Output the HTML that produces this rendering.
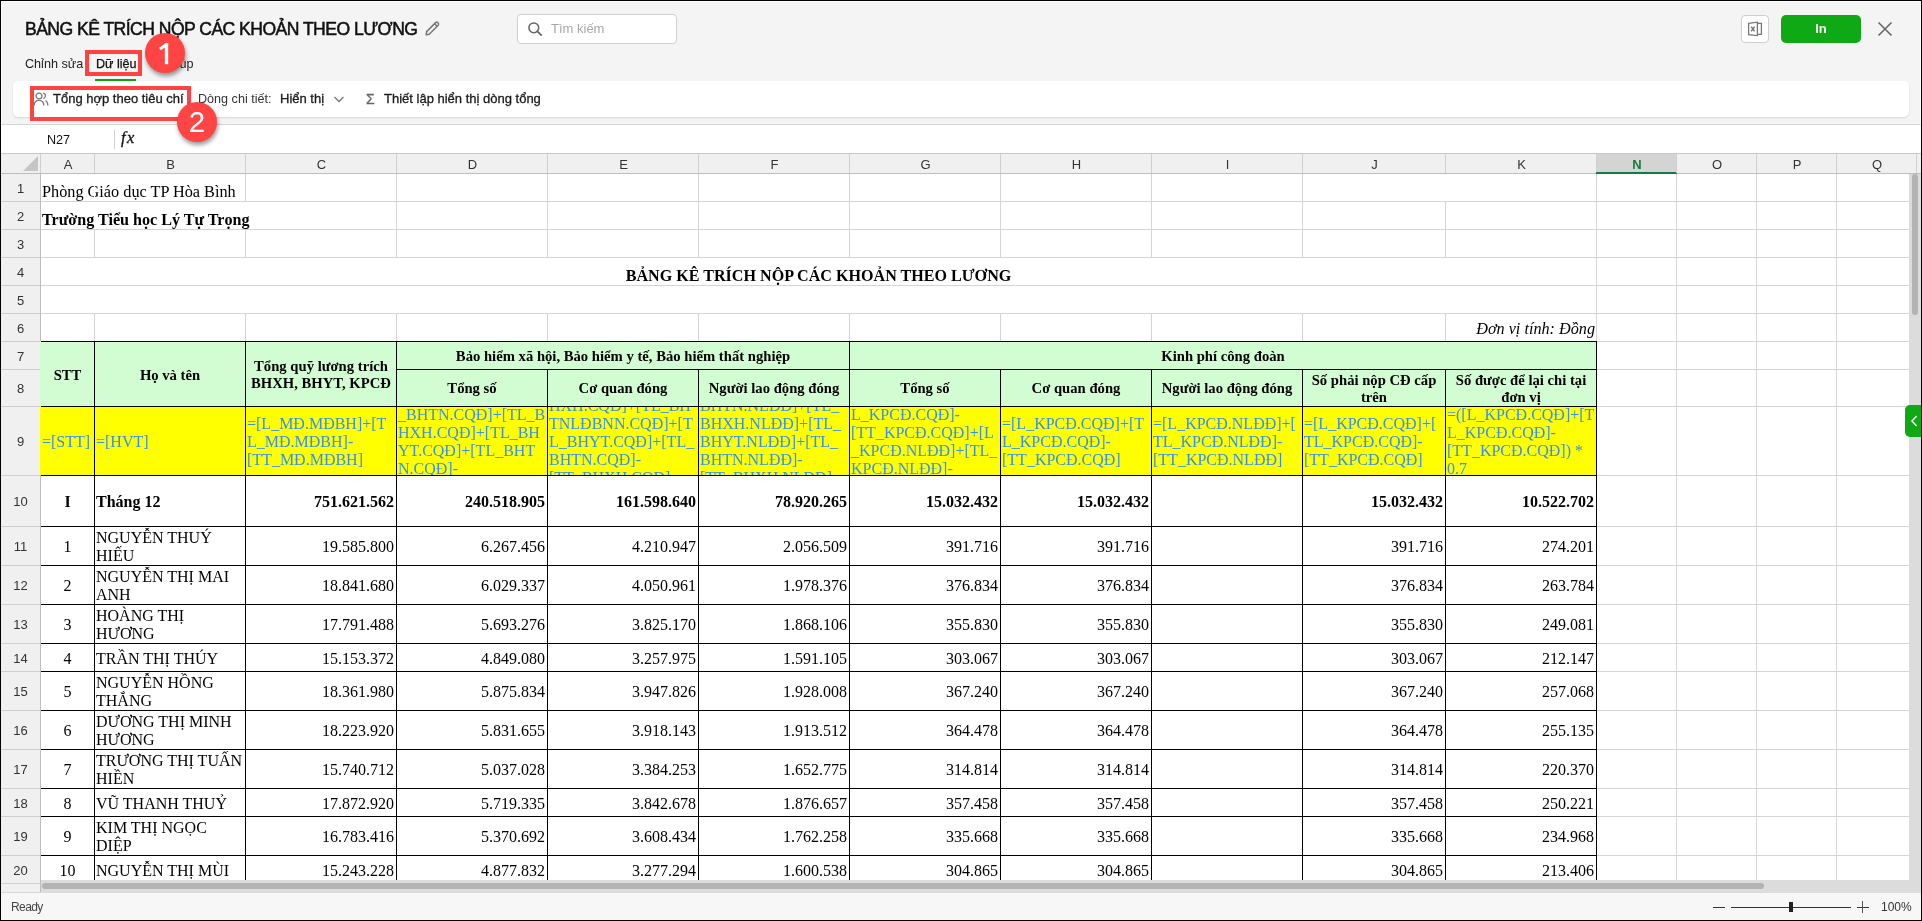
<!DOCTYPE html>
<html><head><meta charset="utf-8"><title>Bang ke</title>
<style>
*{box-sizing:border-box;margin:0;padding:0}
html,body{width:1922px;height:921px;overflow:hidden;background:#000}
body{position:relative;font-family:"Liberation Sans",sans-serif}
body div{position:absolute}
.c{display:flex;align-items:center;overflow:hidden;white-space:nowrap;font-family:"Liberation Serif",serif;font-size:16px;line-height:18px;color:#000}
.c span{display:block}
.hd{font-family:"Liberation Sans",sans-serif;font-size:13px;color:#333;display:flex;align-items:center;justify-content:center}
#wrap{left:0;top:0;width:1922px;height:921px;will-change:transform}
</style></head><body><div id="wrap">

<div style="left:1px;top:1px;width:1920px;height:919px;background:#fff"></div>
<div style="left:2px;top:2px;width:1918px;height:917px;background:#f4f4f4"></div>
<div style="left:25px;top:17px;height:24px;line-height:24px;font-size:17.6px;letter-spacing:-0.55px;color:#111;white-space:nowrap;-webkit-text-stroke:0.5px #111">BẢNG KÊ TRÍCH NỘP CÁC KHOẢN THEO LƯƠNG</div>
<svg style="position:absolute;left:423px;top:20px" width="18" height="18" viewBox="0 0 18 18"><g fill="none" stroke="#777" stroke-width="1.5"><path d="M3.2 14.8 L3.6 11.6 L12.6 2.6 Q13.8 1.6 15 2.8 Q16.2 4 15.2 5.2 L6.2 14.2 Z" stroke-linejoin="round"/><path d="M11.6 3.8 L14 6.2"/></g></svg>
<div style="left:517px;top:14px;width:160px;height:30px;background:#fff;border:1px solid #cfcfcf;border-radius:4px"></div>
<svg style="position:absolute;left:527px;top:21px" width="16" height="16" viewBox="0 0 16 16"><circle cx="6.8" cy="6.8" r="4.9" fill="none" stroke="#666" stroke-width="1.5"/><path d="M10.4 10.4 L14.2 14.2" stroke="#666" stroke-width="1.7" stroke-linecap="round"/></svg>
<div style="left:551px;top:20px;height:18px;line-height:18px;font-size:13px;color:#a8a8a8;white-space:nowrap">Tìm kiếm</div>
<div style="left:1741px;top:15px;width:28px;height:28px;background:#fff;border:1px solid #cfcfcf;border-radius:4px"></div>
<svg style="position:absolute;left:1745px;top:19px" width="20" height="20" viewBox="0 0 20 20"><g fill="none" stroke="#777" stroke-width="1.3"><path d="M3.6 4.4 L12.4 3.2 L12.4 16.6 L3.6 15.6 Z"/><path d="M12.4 4.4 L16.4 4.4 L16.4 15.4 L12.4 15.4"/><path d="M6.2 7.6 L9.6 12.4 M9.6 7.6 L6.2 12.4" stroke-width="1.5"/></g></svg>
<div style="left:1781px;top:15px;width:80px;height:28px;background:#0ea914;border-radius:5px"></div>
<div style="left:1781px;top:15px;width:80px;height:28px;line-height:28px;text-align:center;font-size:13px;font-weight:bold;color:#fff">In</div>
<svg style="position:absolute;left:1876px;top:20px" width="18" height="18" viewBox="0 0 18 18"><path d="M2.5 2.5 L15.5 15.5 M15.5 2.5 L2.5 15.5" stroke="#666" stroke-width="1.6"/></svg>
<div style="left:25px;top:55px;height:18px;line-height:18px;font-size:12.6px;color:#222;white-space:nowrap">Chỉnh sửa</div>
<div style="left:96px;top:55px;height:18px;line-height:18px;font-size:12.6px;color:#111;white-space:nowrap;-webkit-text-stroke:0.25px #111">Dữ liệu</div>
<div style="left:167px;top:55px;height:18px;line-height:18px;font-size:12.6px;color:#222;white-space:nowrap">Giúp</div>
<div style="left:95px;top:79px;width:41px;height:2px;background:#0fa30f"></div>
<div style="left:13px;top:81px;width:1896px;height:36px;background:#fff;border-radius:5px;box-shadow:0 1px 2px rgba(0,0,0,0.12)"></div>
<svg style="position:absolute;left:33px;top:91px" width="16" height="16" viewBox="0 0 16 16"><g fill="none" stroke="#7a7a7a" stroke-width="1.3"><circle cx="6" cy="5" r="2.9"/><path d="M1.2 14.6 Q1.2 9.4 6 9.4 Q10.8 9.4 10.8 14.6"/><path d="M10.2 2.2 Q12.6 2.6 12.4 5 Q12.2 7 10.4 7.6"/><path d="M12.4 9.6 Q14.8 10.4 14.8 14.6"/></g></svg>
<div style="left:53px;top:90px;height:18px;line-height:18px;font-size:13px;color:#1a1a1a;white-space:nowrap;-webkit-text-stroke:0.3px #1a1a1a">Tổng hợp theo tiêu chí</div>
<div style="left:198px;top:90px;height:18px;line-height:18px;font-size:12.6px;color:#333;white-space:nowrap">Dòng chi tiết:</div>
<div style="left:280px;top:90px;height:18px;line-height:18px;font-size:13px;color:#1a1a1a;white-space:nowrap;-webkit-text-stroke:0.3px #1a1a1a">Hiển thị</div>
<svg style="position:absolute;left:333px;top:94px" width="12" height="10" viewBox="0 0 12 10"><path d="M1.5 3 L6 7.5 L10.5 3" fill="none" stroke="#777" stroke-width="1.3"/></svg>
<div style="left:366px;top:90px;height:18px;line-height:18px;font-size:14px;color:#666;-webkit-text-stroke:0.3px #666;white-space:nowrap">Σ</div>
<div style="left:384px;top:90px;height:18px;line-height:18px;font-size:13px;color:#1a1a1a;white-space:nowrap;-webkit-text-stroke:0.3px #1a1a1a">Thiết lập hiển thị dòng tổng</div>
<div style="left:1px;top:124px;width:1920px;height:1px;background:#d6d6d6"></div>
<div style="left:2px;top:125px;width:1918px;height:28px;background:#fff"></div>
<div style="left:47px;top:131px;height:18px;line-height:18px;font-size:12.6px;color:#111;white-space:nowrap">N27</div>
<div style="left:114px;top:130px;width:1px;height:19px;background:#d0d0d0"></div>
<div style="left:121px;top:128px;height:20px;line-height:20px;font-family:'Liberation Serif', serif;font-style:italic;font-size:16.5px;letter-spacing:1.3px;color:#111;-webkit-text-stroke:0.3px #111;white-space:nowrap">fx</div>
<div style="left:1px;top:153px;width:1920px;height:1px;background:#c8c8c8"></div>
<div style="left:1px;top:154px;width:1920px;height:19px;background:#f0f0f0"></div>
<div style="left:1px;top:173px;width:1920px;height:1px;background:#bdbdbd"></div>
<svg style="position:absolute;left:22px;top:155px" width="17" height="17" viewBox="0 0 17 17"><path d="M1 16 L16 1 L16 16 Z" fill="#c6c6c6"/></svg>
<div style="left:40px;top:154px;width:1px;height:19px;background:#cfcfcf"></div>
<div class="hd" style="left:41px;top:155px;width:54px;height:19px">A</div>
<div style="left:94px;top:154px;width:1px;height:19px;background:#cfcfcf"></div>
<div class="hd" style="left:95px;top:155px;width:151px;height:19px">B</div>
<div style="left:245px;top:154px;width:1px;height:19px;background:#cfcfcf"></div>
<div class="hd" style="left:246px;top:155px;width:151px;height:19px">C</div>
<div style="left:396px;top:154px;width:1px;height:19px;background:#cfcfcf"></div>
<div class="hd" style="left:397px;top:155px;width:151px;height:19px">D</div>
<div style="left:547px;top:154px;width:1px;height:19px;background:#cfcfcf"></div>
<div class="hd" style="left:548px;top:155px;width:151px;height:19px">E</div>
<div style="left:698px;top:154px;width:1px;height:19px;background:#cfcfcf"></div>
<div class="hd" style="left:699px;top:155px;width:151px;height:19px">F</div>
<div style="left:849px;top:154px;width:1px;height:19px;background:#cfcfcf"></div>
<div class="hd" style="left:850px;top:155px;width:151px;height:19px">G</div>
<div style="left:1000px;top:154px;width:1px;height:19px;background:#cfcfcf"></div>
<div class="hd" style="left:1001px;top:155px;width:151px;height:19px">H</div>
<div style="left:1151px;top:154px;width:1px;height:19px;background:#cfcfcf"></div>
<div class="hd" style="left:1152px;top:155px;width:151px;height:19px">I</div>
<div style="left:1302px;top:154px;width:1px;height:19px;background:#cfcfcf"></div>
<div class="hd" style="left:1303px;top:155px;width:143px;height:19px">J</div>
<div style="left:1445px;top:154px;width:1px;height:19px;background:#cfcfcf"></div>
<div class="hd" style="left:1446px;top:155px;width:151px;height:19px">K</div>
<div style="left:1596px;top:154px;width:1px;height:19px;background:#cfcfcf"></div>
<div style="left:1597px;top:154px;width:80px;height:18px;background:#d4d4d4"></div>
<div style="left:1596px;top:172px;width:81px;height:2px;background:#107c41"></div>
<div class="hd" style="left:1597px;top:155px;width:80px;height:19px;color:#107c41;font-weight:bold">N</div>
<div style="left:1676px;top:154px;width:1px;height:19px;background:#cfcfcf"></div>
<div class="hd" style="left:1677px;top:155px;width:80px;height:19px">O</div>
<div style="left:1756px;top:154px;width:1px;height:19px;background:#cfcfcf"></div>
<div class="hd" style="left:1757px;top:155px;width:80px;height:19px">P</div>
<div style="left:1836px;top:154px;width:1px;height:19px;background:#cfcfcf"></div>
<div class="hd" style="left:1837px;top:155px;width:80px;height:19px">Q</div>
<div style="left:1916px;top:154px;width:1px;height:19px;background:#cfcfcf"></div>
<div style="left:1px;top:174px;width:39px;height:719px;background:#f0f0f0"></div>
<div style="left:40px;top:174px;width:1px;height:719px;background:#bdbdbd"></div>
<div style="left:1px;top:201px;width:39px;height:1px;background:#cfcfcf"></div>
<div class="hd" style="left:1px;top:174px;width:39px;height:28px">1</div>
<div style="left:1px;top:229px;width:39px;height:1px;background:#cfcfcf"></div>
<div class="hd" style="left:1px;top:202px;width:39px;height:28px">2</div>
<div style="left:1px;top:257px;width:39px;height:1px;background:#cfcfcf"></div>
<div class="hd" style="left:1px;top:230px;width:39px;height:28px">3</div>
<div style="left:1px;top:285px;width:39px;height:1px;background:#cfcfcf"></div>
<div class="hd" style="left:1px;top:258px;width:39px;height:28px">4</div>
<div style="left:1px;top:313px;width:39px;height:1px;background:#cfcfcf"></div>
<div class="hd" style="left:1px;top:286px;width:39px;height:28px">5</div>
<div style="left:1px;top:341px;width:39px;height:1px;background:#cfcfcf"></div>
<div class="hd" style="left:1px;top:314px;width:39px;height:28px">6</div>
<div style="left:1px;top:369px;width:39px;height:1px;background:#cfcfcf"></div>
<div class="hd" style="left:1px;top:342px;width:39px;height:28px">7</div>
<div style="left:1px;top:406px;width:39px;height:1px;background:#cfcfcf"></div>
<div class="hd" style="left:1px;top:370px;width:39px;height:37px">8</div>
<div style="left:1px;top:475px;width:39px;height:1px;background:#cfcfcf"></div>
<div class="hd" style="left:1px;top:407px;width:39px;height:69px">9</div>
<div style="left:1px;top:526px;width:39px;height:1px;background:#cfcfcf"></div>
<div class="hd" style="left:1px;top:476px;width:39px;height:51px">10</div>
<div style="left:1px;top:565px;width:39px;height:1px;background:#cfcfcf"></div>
<div class="hd" style="left:1px;top:527px;width:39px;height:39px">11</div>
<div style="left:1px;top:604px;width:39px;height:1px;background:#cfcfcf"></div>
<div class="hd" style="left:1px;top:566px;width:39px;height:39px">12</div>
<div style="left:1px;top:643px;width:39px;height:1px;background:#cfcfcf"></div>
<div class="hd" style="left:1px;top:605px;width:39px;height:39px">13</div>
<div style="left:1px;top:671px;width:39px;height:1px;background:#cfcfcf"></div>
<div class="hd" style="left:1px;top:644px;width:39px;height:28px">14</div>
<div style="left:1px;top:710px;width:39px;height:1px;background:#cfcfcf"></div>
<div class="hd" style="left:1px;top:672px;width:39px;height:39px">15</div>
<div style="left:1px;top:749px;width:39px;height:1px;background:#cfcfcf"></div>
<div class="hd" style="left:1px;top:711px;width:39px;height:39px">16</div>
<div style="left:1px;top:788px;width:39px;height:1px;background:#cfcfcf"></div>
<div class="hd" style="left:1px;top:750px;width:39px;height:39px">17</div>
<div style="left:1px;top:816px;width:39px;height:1px;background:#cfcfcf"></div>
<div class="hd" style="left:1px;top:789px;width:39px;height:28px">18</div>
<div style="left:1px;top:855px;width:39px;height:1px;background:#cfcfcf"></div>
<div class="hd" style="left:1px;top:817px;width:39px;height:39px">19</div>
<div style="left:1px;top:883px;width:39px;height:1px;background:#cfcfcf"></div>
<div class="hd" style="left:1px;top:856px;width:39px;height:28px">20</div>
<div style="left:1px;top:892px;width:40px;height:1px;background:#d8d8d8"></div>
<div style="left:41px;top:174px;width:1868px;height:706px;background:#fff;overflow:hidden"></div>
<div style="left:94px;top:174px;width:1px;height:706px;background:#d4d4d4"></div>
<div style="left:245px;top:174px;width:1px;height:706px;background:#d4d4d4"></div>
<div style="left:396px;top:174px;width:1px;height:706px;background:#d4d4d4"></div>
<div style="left:547px;top:174px;width:1px;height:706px;background:#d4d4d4"></div>
<div style="left:698px;top:174px;width:1px;height:706px;background:#d4d4d4"></div>
<div style="left:849px;top:174px;width:1px;height:706px;background:#d4d4d4"></div>
<div style="left:1000px;top:174px;width:1px;height:706px;background:#d4d4d4"></div>
<div style="left:1151px;top:174px;width:1px;height:706px;background:#d4d4d4"></div>
<div style="left:1302px;top:174px;width:1px;height:706px;background:#d4d4d4"></div>
<div style="left:1445px;top:174px;width:1px;height:706px;background:#d4d4d4"></div>
<div style="left:1596px;top:174px;width:1px;height:706px;background:#d4d4d4"></div>
<div style="left:1676px;top:174px;width:1px;height:706px;background:#d4d4d4"></div>
<div style="left:1756px;top:174px;width:1px;height:706px;background:#d4d4d4"></div>
<div style="left:1836px;top:174px;width:1px;height:706px;background:#d4d4d4"></div>
<div style="left:1916px;top:174px;width:1px;height:706px;background:#d4d4d4"></div>
<div style="left:41px;top:201px;width:1868px;height:1px;background:#d4d4d4"></div>
<div style="left:41px;top:229px;width:1868px;height:1px;background:#d4d4d4"></div>
<div style="left:41px;top:257px;width:1868px;height:1px;background:#d4d4d4"></div>
<div style="left:41px;top:285px;width:1868px;height:1px;background:#d4d4d4"></div>
<div style="left:41px;top:313px;width:1868px;height:1px;background:#d4d4d4"></div>
<div style="left:41px;top:341px;width:1868px;height:1px;background:#d4d4d4"></div>
<div style="left:41px;top:369px;width:1868px;height:1px;background:#d4d4d4"></div>
<div style="left:41px;top:406px;width:1868px;height:1px;background:#d4d4d4"></div>
<div style="left:41px;top:475px;width:1868px;height:1px;background:#d4d4d4"></div>
<div style="left:41px;top:526px;width:1868px;height:1px;background:#d4d4d4"></div>
<div style="left:41px;top:565px;width:1868px;height:1px;background:#d4d4d4"></div>
<div style="left:41px;top:604px;width:1868px;height:1px;background:#d4d4d4"></div>
<div style="left:41px;top:643px;width:1868px;height:1px;background:#d4d4d4"></div>
<div style="left:41px;top:671px;width:1868px;height:1px;background:#d4d4d4"></div>
<div style="left:41px;top:710px;width:1868px;height:1px;background:#d4d4d4"></div>
<div style="left:41px;top:749px;width:1868px;height:1px;background:#d4d4d4"></div>
<div style="left:41px;top:788px;width:1868px;height:1px;background:#d4d4d4"></div>
<div style="left:41px;top:816px;width:1868px;height:1px;background:#d4d4d4"></div>
<div style="left:41px;top:855px;width:1868px;height:1px;background:#d4d4d4"></div>
<div style="left:41px;top:258px;width:1555px;height:27px;background:#fff"></div>
<div style="left:41px;top:286px;width:1555px;height:27px;background:#fff"></div>
<div style="left:40px;top:341px;width:1556px;height:65px;background:#d2fcd2"></div>
<div style="left:40px;top:406px;width:1556px;height:69px;background:#ffff00"></div>
<div style="left:41px;top:341px;width:1556px;height:1px;background:#000"></div>
<div style="left:396px;top:369px;width:1201px;height:1px;background:#000"></div>
<div style="left:41px;top:406px;width:1556px;height:1px;background:#000"></div>
<div style="left:41px;top:475px;width:1556px;height:1px;background:#000"></div>
<div style="left:41px;top:526px;width:1556px;height:1px;background:#000"></div>
<div style="left:41px;top:565px;width:1556px;height:1px;background:#000"></div>
<div style="left:41px;top:604px;width:1556px;height:1px;background:#000"></div>
<div style="left:41px;top:643px;width:1556px;height:1px;background:#000"></div>
<div style="left:41px;top:671px;width:1556px;height:1px;background:#000"></div>
<div style="left:41px;top:710px;width:1556px;height:1px;background:#000"></div>
<div style="left:41px;top:749px;width:1556px;height:1px;background:#000"></div>
<div style="left:41px;top:788px;width:1556px;height:1px;background:#000"></div>
<div style="left:41px;top:816px;width:1556px;height:1px;background:#000"></div>
<div style="left:41px;top:855px;width:1556px;height:1px;background:#000"></div>
<div style="left:94px;top:341px;width:1px;height:539px;background:#000"></div>
<div style="left:245px;top:341px;width:1px;height:539px;background:#000"></div>
<div style="left:396px;top:341px;width:1px;height:539px;background:#000"></div>
<div style="left:547px;top:369px;width:1px;height:511px;background:#000"></div>
<div style="left:698px;top:369px;width:1px;height:511px;background:#000"></div>
<div style="left:849px;top:341px;width:1px;height:539px;background:#000"></div>
<div style="left:1000px;top:369px;width:1px;height:511px;background:#000"></div>
<div style="left:1151px;top:369px;width:1px;height:511px;background:#000"></div>
<div style="left:1302px;top:369px;width:1px;height:511px;background:#000"></div>
<div style="left:1445px;top:369px;width:1px;height:511px;background:#000"></div>
<div style="left:1596px;top:341px;width:1px;height:539px;background:#000"></div>
<div class="c" style="left:42px;top:174px;width:400px;height:27px;justify-content:flex-start;text-align:left;padding:0;align-items:flex-end;padding-bottom:0px;font-size:16.25px">Phòng Giáo dục TP Hòa Bình</div>
<div style="left:94px;top:174px;width:1px;height:27px;background:#fff"></div>
<div style="left:1445px;top:174px;width:1px;height:27px;background:#fff"></div>
<div style="left:94px;top:202px;width:1px;height:27px;background:#fff"></div>
<div style="left:245px;top:202px;width:1px;height:27px;background:#fff"></div>
<div class="c" style="left:42px;top:202px;width:400px;height:27px;justify-content:flex-start;text-align:left;padding:0;align-items:flex-end;padding-bottom:0px;font-size:16.1px"><b>Trường Tiểu học Lý Tự Trọng</b></div>
<div class="c" style="left:41px;top:258px;width:1555px;height:27px;justify-content:center;text-align:center;padding:0;align-items:flex-end;padding-bottom:0px;font-size:16.1px"><b>BẢNG KÊ TRÍCH NỘP CÁC KHOẢN THEO LƯƠNG</b></div>
<div class="c" style="left:1446px;top:314px;width:149px;height:27px;justify-content:flex-end;text-align:right;padding:0;padding-top:2px;font-size:16.2px"><i>Đơn vị tính: Đồng</i></div>
<div class="c" style="left:41px;top:342px;width:53px;height:64px;justify-content:center;text-align:center;padding:0;font-size:14.67px;line-height:17px;font-weight:bold;padding-top:2px;">STT</div>
<div class="c" style="left:95px;top:342px;width:150px;height:64px;justify-content:center;text-align:center;padding:0;font-size:14.67px;line-height:17px;font-weight:bold;padding-top:2px;">Họ và tên</div>
<div class="c" style="left:246px;top:342px;width:150px;height:64px;justify-content:center;text-align:center;padding:0;font-size:14.67px;line-height:17px;font-weight:bold;padding-top:2px;">Tổng quỹ lương trích<br>BHXH, BHYT, KPCĐ</div>
<div class="c" style="left:397px;top:342px;width:452px;height:27px;justify-content:center;text-align:center;padding:0;font-size:14.67px;line-height:17px;font-weight:bold;padding-top:2px;">Bảo hiểm xã hội, Bảo hiểm y tế, Bảo hiểm thất nghiệp</div>
<div class="c" style="left:850px;top:342px;width:746px;height:27px;justify-content:center;text-align:center;padding:0;font-size:14.67px;line-height:17px;font-weight:bold;padding-top:2px;">Kinh phí công đoàn</div>
<div class="c" style="left:397px;top:370px;width:150px;height:36px;justify-content:center;text-align:center;padding:0;font-size:14.67px;line-height:17px;font-weight:bold;padding-top:2px;padding-top:0px">Tổng số</div>
<div class="c" style="left:548px;top:370px;width:150px;height:36px;justify-content:center;text-align:center;padding:0;font-size:14.67px;line-height:17px;font-weight:bold;padding-top:2px;padding-top:0px">Cơ quan đóng</div>
<div class="c" style="left:699px;top:370px;width:150px;height:36px;justify-content:center;text-align:center;padding:0;font-size:14.67px;line-height:17px;font-weight:bold;padding-top:2px;padding-top:0px">Người lao động đóng</div>
<div class="c" style="left:850px;top:370px;width:150px;height:36px;justify-content:center;text-align:center;padding:0;font-size:14.67px;line-height:17px;font-weight:bold;padding-top:2px;padding-top:0px">Tổng số</div>
<div class="c" style="left:1001px;top:370px;width:150px;height:36px;justify-content:center;text-align:center;padding:0;font-size:14.67px;line-height:17px;font-weight:bold;padding-top:2px;padding-top:0px">Cơ quan đóng</div>
<div class="c" style="left:1152px;top:370px;width:150px;height:36px;justify-content:center;text-align:center;padding:0;font-size:14.67px;line-height:17px;font-weight:bold;padding-top:2px;padding-top:0px">Người lao động đóng</div>
<div class="c" style="left:1303px;top:370px;width:142px;height:36px;justify-content:center;text-align:center;padding:0;font-size:14.67px;line-height:17px;font-weight:bold;padding-top:2px;">Số phải nộp CĐ cấp<br>trên</div>
<div class="c" style="left:1446px;top:370px;width:150px;height:36px;justify-content:center;text-align:center;padding:0;font-size:14.67px;line-height:17px;font-weight:bold;padding-top:2px;">Số được để lại chi tại<br>đơn vị</div>
<div style="left:41px;top:407px;width:53px;height:68px;overflow:hidden;font-family:'Liberation Serif', serif;font-size:16px;color:#3291f0"><div style="left:1px;top:26px;height:18px;line-height:18px;white-space:nowrap">=[STT]</div></div>
<div style="left:95px;top:407px;width:150px;height:68px;overflow:hidden;font-family:'Liberation Serif', serif;font-size:16px;color:#3291f0"><div style="left:1px;top:26px;height:18px;line-height:18px;white-space:nowrap">=[HVT]</div></div>
<div style="left:246px;top:407px;width:150px;height:68px;overflow:hidden;font-family:'Liberation Serif', serif;font-size:16px;color:#3291f0"><div style="left:1px;top:8px;height:18px;line-height:18px;white-space:nowrap">=[L_MĐ.MĐBH]+[T</div><div style="left:1px;top:26px;height:18px;line-height:18px;white-space:nowrap">L_MĐ.MĐBH]-</div><div style="left:1px;top:44px;height:18px;line-height:18px;white-space:nowrap">[TT_MĐ.MĐBH]</div></div>
<div style="left:397px;top:407px;width:150px;height:68px;overflow:hidden;font-family:'Liberation Serif', serif;font-size:16px;color:#3291f0"><div style="left:1px;top:-19px;height:18px;line-height:18px;white-space:nowrap">_BHYT.CQĐ]+[L</div><div style="left:1px;top:-1px;height:18px;line-height:18px;white-space:nowrap">_BHTN.CQĐ]+[TL_B</div><div style="left:1px;top:17px;height:18px;line-height:18px;white-space:nowrap">HXH.CQĐ]+[TL_BH</div><div style="left:1px;top:35px;height:18px;line-height:18px;white-space:nowrap">YT.CQĐ]+[TL_BHT</div><div style="left:1px;top:53px;height:18px;line-height:18px;white-space:nowrap">N.CQĐ]-</div></div>
<div style="left:548px;top:407px;width:150px;height:68px;overflow:hidden;font-family:'Liberation Serif', serif;font-size:16px;color:#3291f0"><div style="left:1px;top:-10px;height:18px;line-height:18px;white-space:nowrap">HXH.CQĐ]+[TL_BH</div><div style="left:1px;top:8px;height:18px;line-height:18px;white-space:nowrap">TNLĐBNN.CQĐ]+[T</div><div style="left:1px;top:26px;height:18px;line-height:18px;white-space:nowrap">L_BHYT.CQĐ]+[TL_</div><div style="left:1px;top:44px;height:18px;line-height:18px;white-space:nowrap">BHTN.CQĐ]-</div><div style="left:1px;top:62px;height:18px;line-height:18px;white-space:nowrap">[TT_BHXH.CQĐ]</div></div>
<div style="left:699px;top:407px;width:150px;height:68px;overflow:hidden;font-family:'Liberation Serif', serif;font-size:16px;color:#3291f0"><div style="left:1px;top:-10px;height:18px;line-height:18px;white-space:nowrap">BHTN.NLĐĐ]+[TL_</div><div style="left:1px;top:8px;height:18px;line-height:18px;white-space:nowrap">BHXH.NLĐĐ]+[TL_</div><div style="left:1px;top:26px;height:18px;line-height:18px;white-space:nowrap">BHYT.NLĐĐ]+[TL_</div><div style="left:1px;top:44px;height:18px;line-height:18px;white-space:nowrap">BHTN.NLĐĐ]-</div><div style="left:1px;top:62px;height:18px;line-height:18px;white-space:nowrap">[TT_BHXH.NLĐĐ]</div></div>
<div style="left:850px;top:407px;width:150px;height:68px;overflow:hidden;font-family:'Liberation Serif', serif;font-size:16px;color:#3291f0"><div style="left:1px;top:-19px;height:18px;line-height:18px;white-space:nowrap">=[L_KPCĐ.CQĐ]+[T</div><div style="left:1px;top:-1px;height:18px;line-height:18px;white-space:nowrap">L_KPCĐ.CQĐ]-</div><div style="left:1px;top:17px;height:18px;line-height:18px;white-space:nowrap">[TT_KPCĐ.CQĐ]+[L</div><div style="left:1px;top:35px;height:18px;line-height:18px;white-space:nowrap">_KPCĐ.NLĐĐ]+[TL_</div><div style="left:1px;top:53px;height:18px;line-height:18px;white-space:nowrap">KPCĐ.NLĐĐ]-</div></div>
<div style="left:1001px;top:407px;width:150px;height:68px;overflow:hidden;font-family:'Liberation Serif', serif;font-size:16px;color:#3291f0"><div style="left:1px;top:8px;height:18px;line-height:18px;white-space:nowrap">=[L_KPCĐ.CQĐ]+[T</div><div style="left:1px;top:26px;height:18px;line-height:18px;white-space:nowrap">L_KPCĐ.CQĐ]-</div><div style="left:1px;top:44px;height:18px;line-height:18px;white-space:nowrap">[TT_KPCĐ.CQĐ]</div></div>
<div style="left:1152px;top:407px;width:150px;height:68px;overflow:hidden;font-family:'Liberation Serif', serif;font-size:16px;color:#3291f0"><div style="left:1px;top:8px;height:18px;line-height:18px;white-space:nowrap">=[L_KPCĐ.NLĐĐ]+[</div><div style="left:1px;top:26px;height:18px;line-height:18px;white-space:nowrap">TL_KPCĐ.NLĐĐ]-</div><div style="left:1px;top:44px;height:18px;line-height:18px;white-space:nowrap">[TT_KPCĐ.NLĐĐ]</div></div>
<div style="left:1303px;top:407px;width:142px;height:68px;overflow:hidden;font-family:'Liberation Serif', serif;font-size:16px;color:#3291f0"><div style="left:1px;top:8px;height:18px;line-height:18px;white-space:nowrap">=[L_KPCĐ.CQĐ]+[</div><div style="left:1px;top:26px;height:18px;line-height:18px;white-space:nowrap">TL_KPCĐ.CQĐ]-</div><div style="left:1px;top:44px;height:18px;line-height:18px;white-space:nowrap">[TT_KPCĐ.CQĐ]</div></div>
<div style="left:1446px;top:407px;width:150px;height:68px;overflow:hidden;font-family:'Liberation Serif', serif;font-size:16px;color:#3291f0"><div style="left:1px;top:-1px;height:18px;line-height:18px;white-space:nowrap">=([L_KPCĐ.CQĐ]+[T</div><div style="left:1px;top:17px;height:18px;line-height:18px;white-space:nowrap">L_KPCĐ.CQĐ]-</div><div style="left:1px;top:35px;height:18px;line-height:18px;white-space:nowrap">[TT_KPCĐ.CQĐ]) *</div><div style="left:1px;top:53px;height:18px;line-height:18px;white-space:nowrap">0.7</div></div>
<div class="c" style="left:41px;top:476px;width:53px;height:50px;justify-content:center;text-align:center;padding:0;font-weight:bold;padding-top:2px">I</div>
<div class="c" style="left:96px;top:476px;width:149px;height:50px;justify-content:flex-start;text-align:left;padding:0;font-weight:bold;padding-top:2px">Tháng 12</div>
<div class="c" style="left:246px;top:476px;width:148px;height:50px;justify-content:flex-end;text-align:right;padding:0;font-weight:bold;padding-top:2px">751.621.562</div>
<div class="c" style="left:397px;top:476px;width:148px;height:50px;justify-content:flex-end;text-align:right;padding:0;font-weight:bold;padding-top:2px">240.518.905</div>
<div class="c" style="left:548px;top:476px;width:148px;height:50px;justify-content:flex-end;text-align:right;padding:0;font-weight:bold;padding-top:2px">161.598.640</div>
<div class="c" style="left:699px;top:476px;width:148px;height:50px;justify-content:flex-end;text-align:right;padding:0;font-weight:bold;padding-top:2px">78.920.265</div>
<div class="c" style="left:850px;top:476px;width:148px;height:50px;justify-content:flex-end;text-align:right;padding:0;font-weight:bold;padding-top:2px">15.032.432</div>
<div class="c" style="left:1001px;top:476px;width:148px;height:50px;justify-content:flex-end;text-align:right;padding:0;font-weight:bold;padding-top:2px">15.032.432</div>
<div class="c" style="left:1303px;top:476px;width:140px;height:50px;justify-content:flex-end;text-align:right;padding:0;font-weight:bold;padding-top:2px">15.032.432</div>
<div class="c" style="left:1446px;top:476px;width:148px;height:50px;justify-content:flex-end;text-align:right;padding:0;font-weight:bold;padding-top:2px">10.522.702</div>
<div class="c" style="left:41px;top:527px;width:53px;height:38px;justify-content:center;text-align:center;padding:0;;padding-top:2px">1</div>
<div class="c" style="left:96px;top:527px;width:149px;height:38px;justify-content:flex-start;text-align:left;padding:0;;padding-top:2px">NGUYỄN THUÝ<br>HIẾU</div>
<div class="c" style="left:246px;top:527px;width:148px;height:38px;justify-content:flex-end;text-align:right;padding:0;;padding-top:2px">19.585.800</div>
<div class="c" style="left:397px;top:527px;width:148px;height:38px;justify-content:flex-end;text-align:right;padding:0;;padding-top:2px">6.267.456</div>
<div class="c" style="left:548px;top:527px;width:148px;height:38px;justify-content:flex-end;text-align:right;padding:0;;padding-top:2px">4.210.947</div>
<div class="c" style="left:699px;top:527px;width:148px;height:38px;justify-content:flex-end;text-align:right;padding:0;;padding-top:2px">2.056.509</div>
<div class="c" style="left:850px;top:527px;width:148px;height:38px;justify-content:flex-end;text-align:right;padding:0;;padding-top:2px">391.716</div>
<div class="c" style="left:1001px;top:527px;width:148px;height:38px;justify-content:flex-end;text-align:right;padding:0;;padding-top:2px">391.716</div>
<div class="c" style="left:1303px;top:527px;width:140px;height:38px;justify-content:flex-end;text-align:right;padding:0;;padding-top:2px">391.716</div>
<div class="c" style="left:1446px;top:527px;width:148px;height:38px;justify-content:flex-end;text-align:right;padding:0;;padding-top:2px">274.201</div>
<div class="c" style="left:41px;top:566px;width:53px;height:38px;justify-content:center;text-align:center;padding:0;;padding-top:2px">2</div>
<div class="c" style="left:96px;top:566px;width:149px;height:38px;justify-content:flex-start;text-align:left;padding:0;;padding-top:2px">NGUYỄN THỊ MAI<br>ANH</div>
<div class="c" style="left:246px;top:566px;width:148px;height:38px;justify-content:flex-end;text-align:right;padding:0;;padding-top:2px">18.841.680</div>
<div class="c" style="left:397px;top:566px;width:148px;height:38px;justify-content:flex-end;text-align:right;padding:0;;padding-top:2px">6.029.337</div>
<div class="c" style="left:548px;top:566px;width:148px;height:38px;justify-content:flex-end;text-align:right;padding:0;;padding-top:2px">4.050.961</div>
<div class="c" style="left:699px;top:566px;width:148px;height:38px;justify-content:flex-end;text-align:right;padding:0;;padding-top:2px">1.978.376</div>
<div class="c" style="left:850px;top:566px;width:148px;height:38px;justify-content:flex-end;text-align:right;padding:0;;padding-top:2px">376.834</div>
<div class="c" style="left:1001px;top:566px;width:148px;height:38px;justify-content:flex-end;text-align:right;padding:0;;padding-top:2px">376.834</div>
<div class="c" style="left:1303px;top:566px;width:140px;height:38px;justify-content:flex-end;text-align:right;padding:0;;padding-top:2px">376.834</div>
<div class="c" style="left:1446px;top:566px;width:148px;height:38px;justify-content:flex-end;text-align:right;padding:0;;padding-top:2px">263.784</div>
<div class="c" style="left:41px;top:605px;width:53px;height:38px;justify-content:center;text-align:center;padding:0;;padding-top:2px">3</div>
<div class="c" style="left:96px;top:605px;width:149px;height:38px;justify-content:flex-start;text-align:left;padding:0;;padding-top:2px">HOÀNG THỊ<br>HƯƠNG</div>
<div class="c" style="left:246px;top:605px;width:148px;height:38px;justify-content:flex-end;text-align:right;padding:0;;padding-top:2px">17.791.488</div>
<div class="c" style="left:397px;top:605px;width:148px;height:38px;justify-content:flex-end;text-align:right;padding:0;;padding-top:2px">5.693.276</div>
<div class="c" style="left:548px;top:605px;width:148px;height:38px;justify-content:flex-end;text-align:right;padding:0;;padding-top:2px">3.825.170</div>
<div class="c" style="left:699px;top:605px;width:148px;height:38px;justify-content:flex-end;text-align:right;padding:0;;padding-top:2px">1.868.106</div>
<div class="c" style="left:850px;top:605px;width:148px;height:38px;justify-content:flex-end;text-align:right;padding:0;;padding-top:2px">355.830</div>
<div class="c" style="left:1001px;top:605px;width:148px;height:38px;justify-content:flex-end;text-align:right;padding:0;;padding-top:2px">355.830</div>
<div class="c" style="left:1303px;top:605px;width:140px;height:38px;justify-content:flex-end;text-align:right;padding:0;;padding-top:2px">355.830</div>
<div class="c" style="left:1446px;top:605px;width:148px;height:38px;justify-content:flex-end;text-align:right;padding:0;;padding-top:2px">249.081</div>
<div class="c" style="left:41px;top:644px;width:53px;height:27px;justify-content:center;text-align:center;padding:0;;padding-top:2px">4</div>
<div class="c" style="left:96px;top:644px;width:149px;height:27px;justify-content:flex-start;text-align:left;padding:0;;padding-top:2px">TRẦN THỊ THÚY</div>
<div class="c" style="left:246px;top:644px;width:148px;height:27px;justify-content:flex-end;text-align:right;padding:0;;padding-top:2px">15.153.372</div>
<div class="c" style="left:397px;top:644px;width:148px;height:27px;justify-content:flex-end;text-align:right;padding:0;;padding-top:2px">4.849.080</div>
<div class="c" style="left:548px;top:644px;width:148px;height:27px;justify-content:flex-end;text-align:right;padding:0;;padding-top:2px">3.257.975</div>
<div class="c" style="left:699px;top:644px;width:148px;height:27px;justify-content:flex-end;text-align:right;padding:0;;padding-top:2px">1.591.105</div>
<div class="c" style="left:850px;top:644px;width:148px;height:27px;justify-content:flex-end;text-align:right;padding:0;;padding-top:2px">303.067</div>
<div class="c" style="left:1001px;top:644px;width:148px;height:27px;justify-content:flex-end;text-align:right;padding:0;;padding-top:2px">303.067</div>
<div class="c" style="left:1303px;top:644px;width:140px;height:27px;justify-content:flex-end;text-align:right;padding:0;;padding-top:2px">303.067</div>
<div class="c" style="left:1446px;top:644px;width:148px;height:27px;justify-content:flex-end;text-align:right;padding:0;;padding-top:2px">212.147</div>
<div class="c" style="left:41px;top:672px;width:53px;height:38px;justify-content:center;text-align:center;padding:0;;padding-top:2px">5</div>
<div class="c" style="left:96px;top:672px;width:149px;height:38px;justify-content:flex-start;text-align:left;padding:0;;padding-top:2px">NGUYỄN HỒNG<br>THẮNG</div>
<div class="c" style="left:246px;top:672px;width:148px;height:38px;justify-content:flex-end;text-align:right;padding:0;;padding-top:2px">18.361.980</div>
<div class="c" style="left:397px;top:672px;width:148px;height:38px;justify-content:flex-end;text-align:right;padding:0;;padding-top:2px">5.875.834</div>
<div class="c" style="left:548px;top:672px;width:148px;height:38px;justify-content:flex-end;text-align:right;padding:0;;padding-top:2px">3.947.826</div>
<div class="c" style="left:699px;top:672px;width:148px;height:38px;justify-content:flex-end;text-align:right;padding:0;;padding-top:2px">1.928.008</div>
<div class="c" style="left:850px;top:672px;width:148px;height:38px;justify-content:flex-end;text-align:right;padding:0;;padding-top:2px">367.240</div>
<div class="c" style="left:1001px;top:672px;width:148px;height:38px;justify-content:flex-end;text-align:right;padding:0;;padding-top:2px">367.240</div>
<div class="c" style="left:1303px;top:672px;width:140px;height:38px;justify-content:flex-end;text-align:right;padding:0;;padding-top:2px">367.240</div>
<div class="c" style="left:1446px;top:672px;width:148px;height:38px;justify-content:flex-end;text-align:right;padding:0;;padding-top:2px">257.068</div>
<div class="c" style="left:41px;top:711px;width:53px;height:38px;justify-content:center;text-align:center;padding:0;;padding-top:2px">6</div>
<div class="c" style="left:96px;top:711px;width:149px;height:38px;justify-content:flex-start;text-align:left;padding:0;;padding-top:2px">DƯƠNG THỊ MINH<br>HƯƠNG</div>
<div class="c" style="left:246px;top:711px;width:148px;height:38px;justify-content:flex-end;text-align:right;padding:0;;padding-top:2px">18.223.920</div>
<div class="c" style="left:397px;top:711px;width:148px;height:38px;justify-content:flex-end;text-align:right;padding:0;;padding-top:2px">5.831.655</div>
<div class="c" style="left:548px;top:711px;width:148px;height:38px;justify-content:flex-end;text-align:right;padding:0;;padding-top:2px">3.918.143</div>
<div class="c" style="left:699px;top:711px;width:148px;height:38px;justify-content:flex-end;text-align:right;padding:0;;padding-top:2px">1.913.512</div>
<div class="c" style="left:850px;top:711px;width:148px;height:38px;justify-content:flex-end;text-align:right;padding:0;;padding-top:2px">364.478</div>
<div class="c" style="left:1001px;top:711px;width:148px;height:38px;justify-content:flex-end;text-align:right;padding:0;;padding-top:2px">364.478</div>
<div class="c" style="left:1303px;top:711px;width:140px;height:38px;justify-content:flex-end;text-align:right;padding:0;;padding-top:2px">364.478</div>
<div class="c" style="left:1446px;top:711px;width:148px;height:38px;justify-content:flex-end;text-align:right;padding:0;;padding-top:2px">255.135</div>
<div class="c" style="left:41px;top:750px;width:53px;height:38px;justify-content:center;text-align:center;padding:0;;padding-top:2px">7</div>
<div class="c" style="left:96px;top:750px;width:149px;height:38px;justify-content:flex-start;text-align:left;padding:0;;padding-top:2px">TRƯƠNG THỊ TUẤN<br>HIỀN</div>
<div class="c" style="left:246px;top:750px;width:148px;height:38px;justify-content:flex-end;text-align:right;padding:0;;padding-top:2px">15.740.712</div>
<div class="c" style="left:397px;top:750px;width:148px;height:38px;justify-content:flex-end;text-align:right;padding:0;;padding-top:2px">5.037.028</div>
<div class="c" style="left:548px;top:750px;width:148px;height:38px;justify-content:flex-end;text-align:right;padding:0;;padding-top:2px">3.384.253</div>
<div class="c" style="left:699px;top:750px;width:148px;height:38px;justify-content:flex-end;text-align:right;padding:0;;padding-top:2px">1.652.775</div>
<div class="c" style="left:850px;top:750px;width:148px;height:38px;justify-content:flex-end;text-align:right;padding:0;;padding-top:2px">314.814</div>
<div class="c" style="left:1001px;top:750px;width:148px;height:38px;justify-content:flex-end;text-align:right;padding:0;;padding-top:2px">314.814</div>
<div class="c" style="left:1303px;top:750px;width:140px;height:38px;justify-content:flex-end;text-align:right;padding:0;;padding-top:2px">314.814</div>
<div class="c" style="left:1446px;top:750px;width:148px;height:38px;justify-content:flex-end;text-align:right;padding:0;;padding-top:2px">220.370</div>
<div class="c" style="left:41px;top:789px;width:53px;height:27px;justify-content:center;text-align:center;padding:0;;padding-top:2px">8</div>
<div class="c" style="left:96px;top:789px;width:149px;height:27px;justify-content:flex-start;text-align:left;padding:0;;padding-top:2px">VŨ THANH THUỶ</div>
<div class="c" style="left:246px;top:789px;width:148px;height:27px;justify-content:flex-end;text-align:right;padding:0;;padding-top:2px">17.872.920</div>
<div class="c" style="left:397px;top:789px;width:148px;height:27px;justify-content:flex-end;text-align:right;padding:0;;padding-top:2px">5.719.335</div>
<div class="c" style="left:548px;top:789px;width:148px;height:27px;justify-content:flex-end;text-align:right;padding:0;;padding-top:2px">3.842.678</div>
<div class="c" style="left:699px;top:789px;width:148px;height:27px;justify-content:flex-end;text-align:right;padding:0;;padding-top:2px">1.876.657</div>
<div class="c" style="left:850px;top:789px;width:148px;height:27px;justify-content:flex-end;text-align:right;padding:0;;padding-top:2px">357.458</div>
<div class="c" style="left:1001px;top:789px;width:148px;height:27px;justify-content:flex-end;text-align:right;padding:0;;padding-top:2px">357.458</div>
<div class="c" style="left:1303px;top:789px;width:140px;height:27px;justify-content:flex-end;text-align:right;padding:0;;padding-top:2px">357.458</div>
<div class="c" style="left:1446px;top:789px;width:148px;height:27px;justify-content:flex-end;text-align:right;padding:0;;padding-top:2px">250.221</div>
<div class="c" style="left:41px;top:817px;width:53px;height:38px;justify-content:center;text-align:center;padding:0;;padding-top:2px">9</div>
<div class="c" style="left:96px;top:817px;width:149px;height:38px;justify-content:flex-start;text-align:left;padding:0;;padding-top:2px">KIM THỊ NGỌC<br>DIỆP</div>
<div class="c" style="left:246px;top:817px;width:148px;height:38px;justify-content:flex-end;text-align:right;padding:0;;padding-top:2px">16.783.416</div>
<div class="c" style="left:397px;top:817px;width:148px;height:38px;justify-content:flex-end;text-align:right;padding:0;;padding-top:2px">5.370.692</div>
<div class="c" style="left:548px;top:817px;width:148px;height:38px;justify-content:flex-end;text-align:right;padding:0;;padding-top:2px">3.608.434</div>
<div class="c" style="left:699px;top:817px;width:148px;height:38px;justify-content:flex-end;text-align:right;padding:0;;padding-top:2px">1.762.258</div>
<div class="c" style="left:850px;top:817px;width:148px;height:38px;justify-content:flex-end;text-align:right;padding:0;;padding-top:2px">335.668</div>
<div class="c" style="left:1001px;top:817px;width:148px;height:38px;justify-content:flex-end;text-align:right;padding:0;;padding-top:2px">335.668</div>
<div class="c" style="left:1303px;top:817px;width:140px;height:38px;justify-content:flex-end;text-align:right;padding:0;;padding-top:2px">335.668</div>
<div class="c" style="left:1446px;top:817px;width:148px;height:38px;justify-content:flex-end;text-align:right;padding:0;;padding-top:2px">234.968</div>
<div class="c" style="left:41px;top:856px;width:53px;height:27px;justify-content:center;text-align:center;padding:0;;padding-top:2px">10</div>
<div class="c" style="left:96px;top:856px;width:149px;height:27px;justify-content:flex-start;text-align:left;padding:0;;padding-top:2px">NGUYỄN THỊ MÙI</div>
<div class="c" style="left:246px;top:856px;width:148px;height:27px;justify-content:flex-end;text-align:right;padding:0;;padding-top:2px">15.243.228</div>
<div class="c" style="left:397px;top:856px;width:148px;height:27px;justify-content:flex-end;text-align:right;padding:0;;padding-top:2px">4.877.832</div>
<div class="c" style="left:548px;top:856px;width:148px;height:27px;justify-content:flex-end;text-align:right;padding:0;;padding-top:2px">3.277.294</div>
<div class="c" style="left:699px;top:856px;width:148px;height:27px;justify-content:flex-end;text-align:right;padding:0;;padding-top:2px">1.600.538</div>
<div class="c" style="left:850px;top:856px;width:148px;height:27px;justify-content:flex-end;text-align:right;padding:0;;padding-top:2px">304.865</div>
<div class="c" style="left:1001px;top:856px;width:148px;height:27px;justify-content:flex-end;text-align:right;padding:0;;padding-top:2px">304.865</div>
<div class="c" style="left:1303px;top:856px;width:140px;height:27px;justify-content:flex-end;text-align:right;padding:0;;padding-top:2px">304.865</div>
<div class="c" style="left:1446px;top:856px;width:148px;height:27px;justify-content:flex-end;text-align:right;padding:0;;padding-top:2px">213.406</div>
<div style="left:1909px;top:174px;width:12px;height:706px;background:#dcdcdc"></div>
<div style="left:1912px;top:174px;width:6px;height:141px;background:#b3b3b3;border-radius:3px"></div>
<div style="left:41px;top:880px;width:1880px;height:13px;background:#dcdcdc"></div>
<div style="left:42px;top:883px;width:1722px;height:6px;background:#b3b3b3;border-radius:3px"></div>
<div style="left:1905px;top:405px;width:16px;height:32px;background:#0ea914;border-radius:5px 0 0 5px"></div>
<svg style="position:absolute;left:1909px;top:413px" width="10" height="16" viewBox="0 0 10 16"><path d="M7.6 3 L3 8 L7.6 13" fill="none" stroke="#fff" stroke-width="1.5"/></svg>
<div style="left:1px;top:893px;width:1920px;height:27px;background:#f7f7f7"></div>
<div style="left:11px;top:899px;height:16px;line-height:16px;font-size:12px;letter-spacing:-0.6px;color:#444;white-space:nowrap">Ready</div>
<div style="left:1713px;top:907px;width:12px;height:1px;background:#333"></div>
<div style="left:1731px;top:907px;width:120px;height:1px;background:#333"></div>
<div style="left:1789px;top:902px;width:4px;height:10px;background:#222"></div>
<div style="left:1857px;top:907px;width:12px;height:1px;background:#333"></div>
<div style="left:1862px;top:901px;width:1px;height:12px;background:#555"></div>
<div style="left:1881px;top:899px;height:16px;line-height:16px;font-size:12px;color:#333;white-space:nowrap">100%</div>
<div style="left:85px;top:50px;width:57px;height:26px;border:4px solid #ff4242"></div>
<div style="left:30px;top:86px;width:161px;height:35px;border:4px solid #ff4242"></div>
<div style="left:145px;top:33px;width:40px;height:40px;border-radius:50%;background:#ff4444;box-shadow:1px 3px 4px rgba(0,0,0,0.4);color:#fff;font-size:29.5px;line-height:40px;text-align:center"><svg style="position:absolute;left:0;top:0" width="40" height="40" viewBox="0 0 40 40"><path d="M21.5 10.2 L21.5 31.2" stroke="#fff" stroke-width="3.4"/><path d="M22.6 10.6 L15 16" stroke="#fff" stroke-width="3"/></svg></div>
<div style="left:177px;top:102px;width:40px;height:40px;border-radius:50%;background:#ff4444;box-shadow:1px 3px 4px rgba(0,0,0,0.4);color:#fff;font-size:29.5px;line-height:40px;text-align:center">2</div>
</div></body></html>
